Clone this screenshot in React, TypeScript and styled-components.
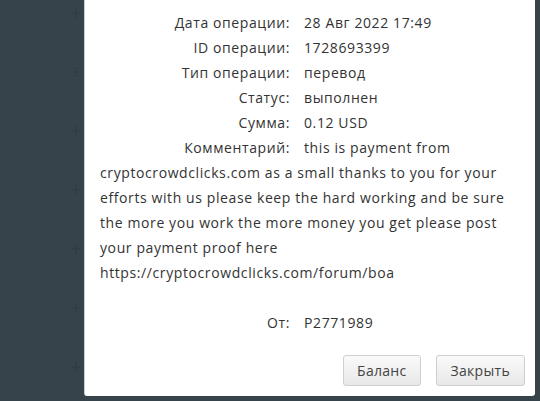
import React from 'react';
import styled, { createGlobalStyle } from 'styled-components';

const GlobalStyle = createGlobalStyle`
  html, body {
    margin: 0;
    padding: 0;
    background: #37434b;
    overflow: hidden;
  }
  #root {
    height: 401px;
  }
`;

const Page = styled.div`
  display: flex;
  height: 401px;
  width: 540px;
  background: #37434b;
  font-family: 'Open Sans', 'Liberation Sans', sans-serif;
`;

const Gutter = styled.div`
  width: 84px;
  flex-shrink: 0;
  display: flex;
  flex-direction: column;
  align-items: flex-end;
  padding: 8px 3px 0 0;
  box-sizing: border-box;
  gap: 49px;
`;

const Plus = styled.svg`
  width: 10px;
  height: 10px;
  display: block;
`;

const Modal = styled.div`
  width: 451px;
  height: 396px;
  background: #fff;
  border-left: 1px solid #c9cdd0;
  border-radius: 0 0 3px 3px;
  box-sizing: border-box;
  display: flex;
  flex-direction: column;
`;

const Body = styled.div`
  padding: 10px 16px 0 15px;
  color: #333;
  font-size: 14px;
  line-height: 25px;
  letter-spacing: 0.6px;
  flex: 1;
`;

const Row = styled.div`
  display: flex;
`;

const Label = styled.span`
  display: inline-block;
  width: 190px;
  text-align: right;
  margin-right: 14px;
`;

const Comment = styled.div`
  margin-bottom: 25px;
  word-break: break-word;
`;

const Footer = styled.div`
  display: flex;
  justify-content: flex-end;
  gap: 15px;
  padding: 0 10px 10px 0;
`;

const Button = styled.button`
  height: 31px;
  padding: 0 ${(p: { $wide?: boolean }) => (p.$wide ? '14px' : '13px')};
  font-family: inherit;
  font-size: 14px;
  letter-spacing: 0.3px;
  color: #444;
  background: linear-gradient(#fafafa, #e8e8e8);
  border: 1px solid #cfcfcf;
  border-radius: 3px;
  cursor: pointer;
`;

const rows: [string, string][] = [
  ['Дата операции:', '28 Авг 2022 17:49'],
  ['ID операции:', '1728693399'],
  ['Тип операции:', 'перевод'],
  ['Статус:', 'выполнен'],
  ['Сумма:', '0.12 USD'],
];

export default function App() {
  return (
    <>
      <GlobalStyle />
      <Page>
        <Gutter>
          {Array.from({ length: 7 }).map((_, i) => (
            <Plus key={i} viewBox="0 0 10 10">
              <path d="M5 0v10M0 5h10" stroke="#303b43" strokeWidth="1.2" />
            </Plus>
          ))}
        </Gutter>
        <Modal>
          <Body>
            {rows.map(([k, v]) => (
              <Row key={k}>
                <Label>{k}</Label>
                <span>{v}</span>
              </Row>
            ))}
            <Comment>
              <Label>Комментарий:</Label>
              this is payment from cryptocrowdclicks.com as a small thanks to you for your efforts with us please keep the hard working and be sure the more you work the more money you get please post your payment proof here https://cryptocrowdclicks.com/forum/boa
            </Comment>
            <Row>
              <Label>От:</Label>
              <span>P2771989</span>
            </Row>
          </Body>
          <Footer>
            <Button>Баланс</Button>
            <Button $wide>Закрыть</Button>
          </Footer>
        </Modal>
      </Page>
    </>
  );
}
